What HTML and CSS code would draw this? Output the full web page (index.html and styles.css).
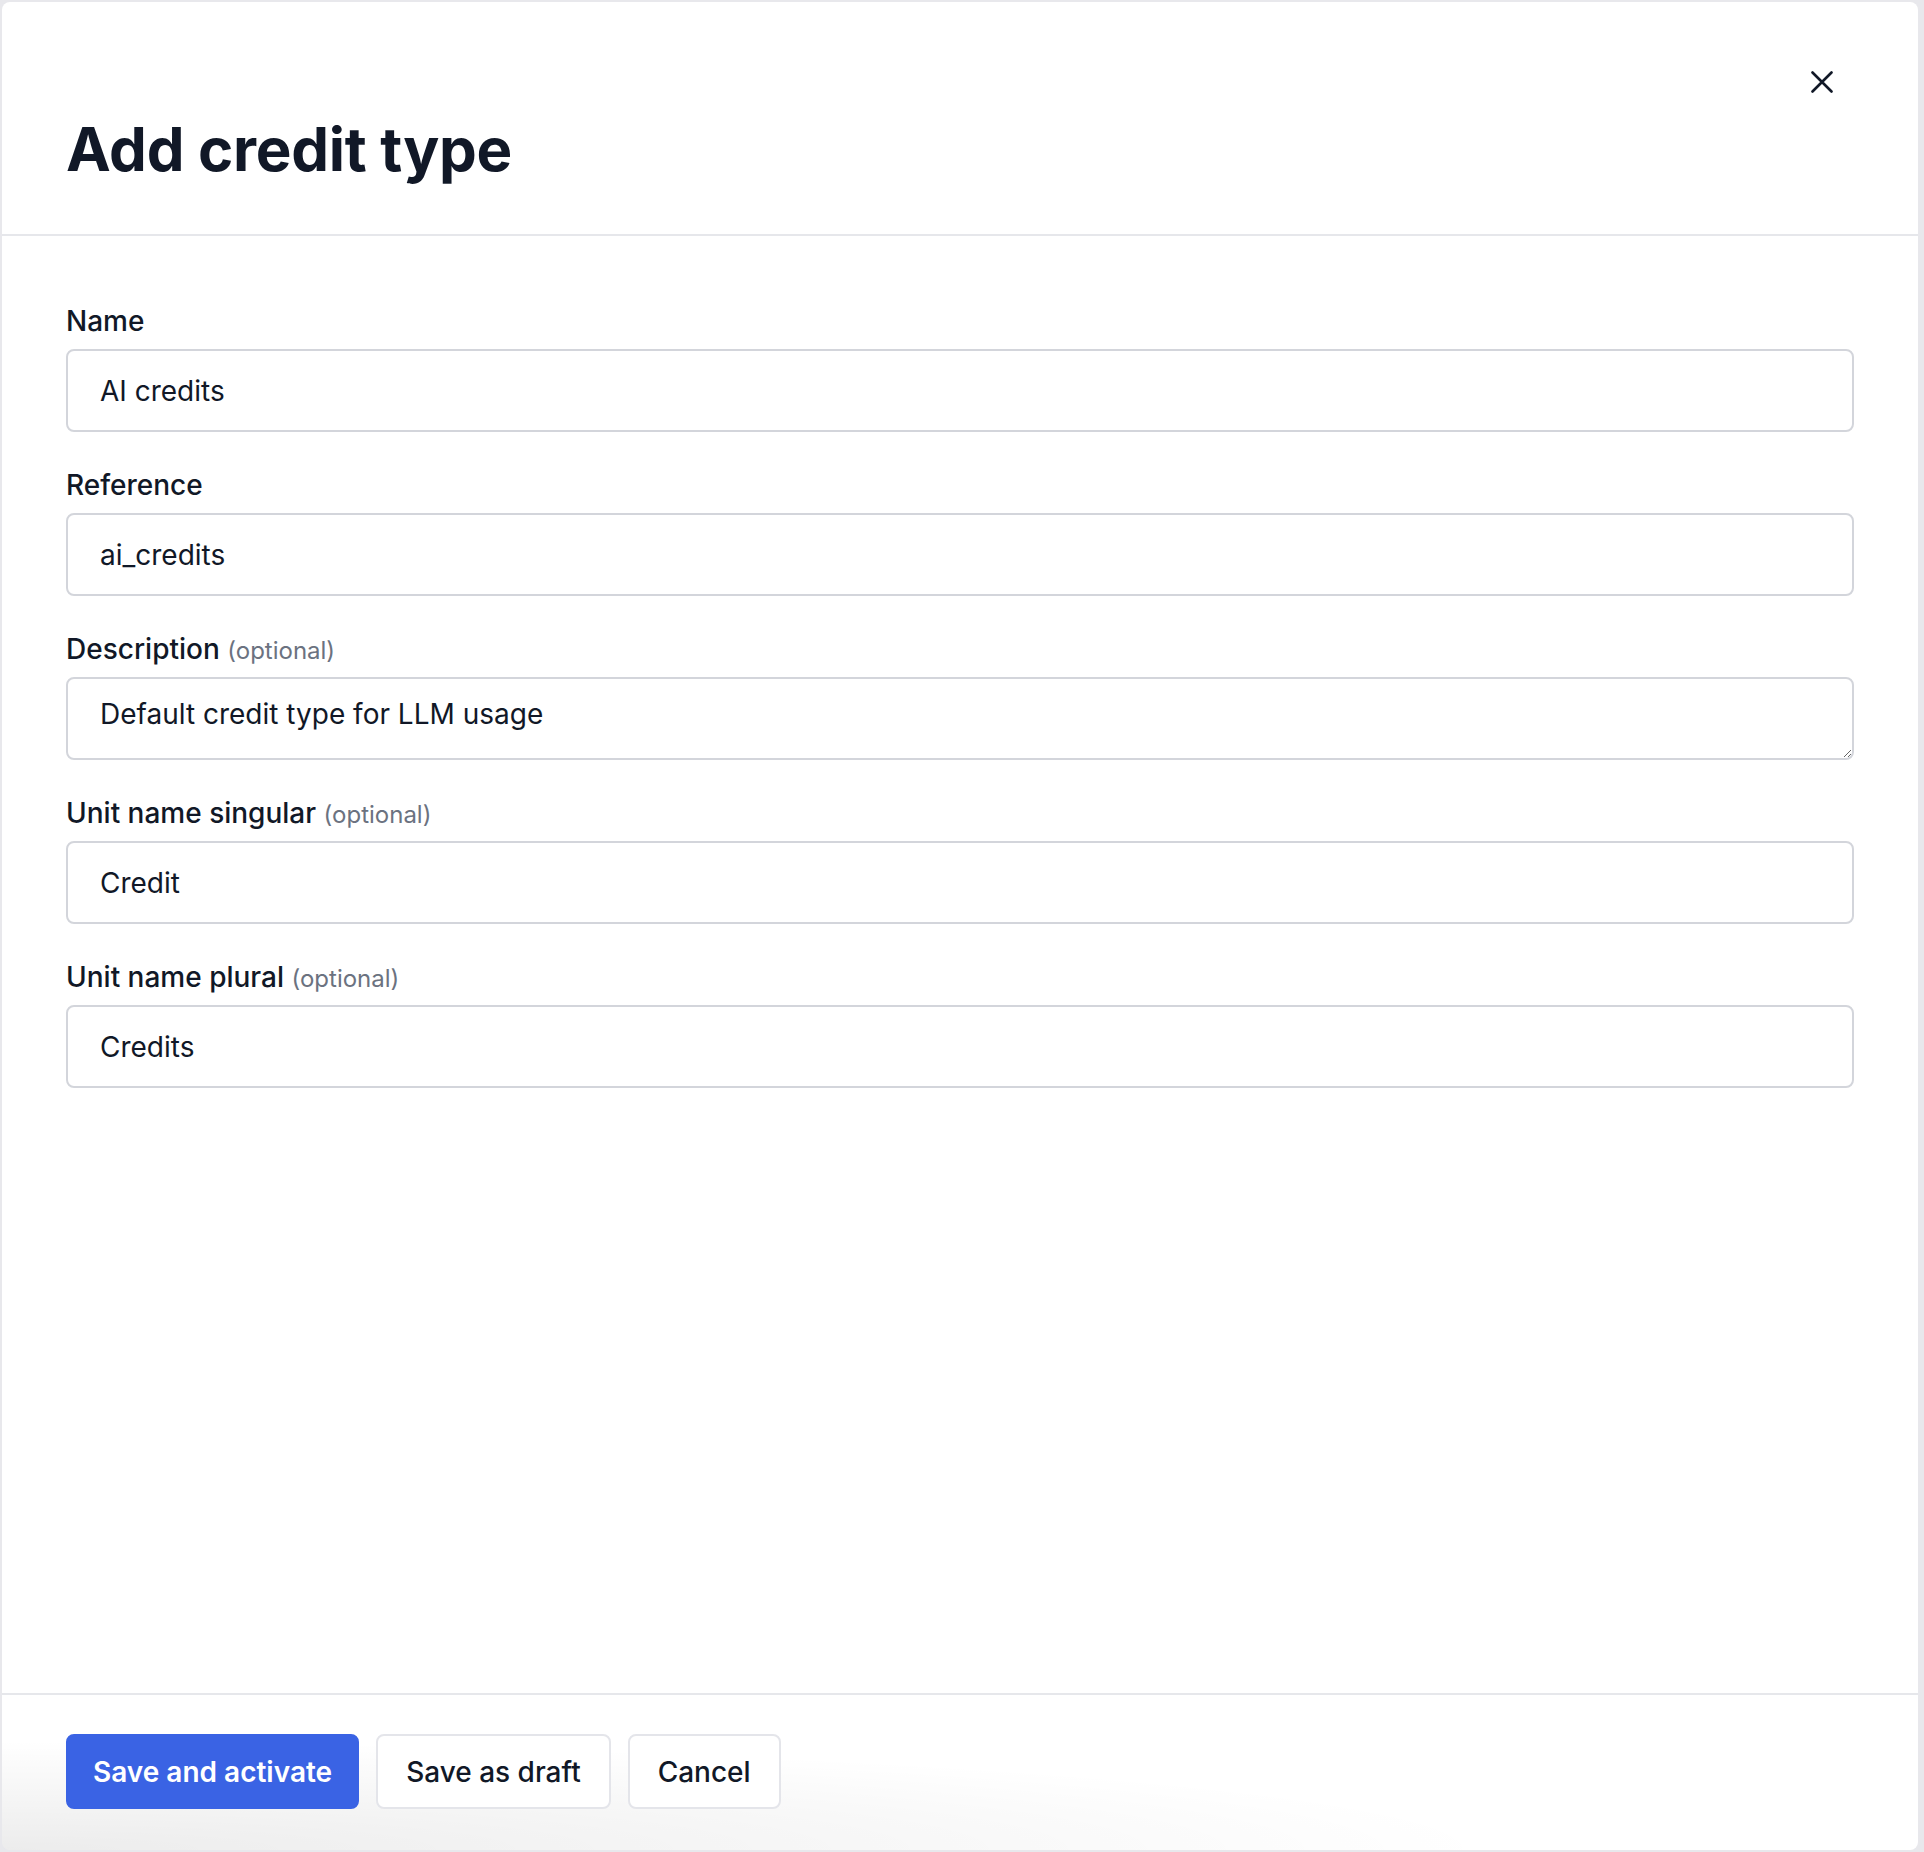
FILE: index.html
```html
<!DOCTYPE html>
<html lang="en">
<head>
<meta charset="utf-8">
<title>Add credit type</title>
<link rel="stylesheet" href="styles.css">
</head>
<body>
<div class="panel">
  <header class="panel-header">
    <div class="close-row">
      <button class="close-btn" type="button" aria-label="Close">
        <svg width="22" height="22" viewBox="0 0 22 22" fill="none" stroke="#111827" stroke-width="2.6" stroke-linecap="round">
          <path d="M1.5 1.5 L20.5 20.5 M20.5 1.5 L1.5 20.5"/>
        </svg>
      </button>
    </div>
    <h1 class="title">Add credit type</h1>
  </header>
  <main class="panel-body">
    <div class="field">
      <label class="label">Name</label>
      <input class="input" type="text" value="AI credits">
    </div>
    <div class="field">
      <label class="label">Reference</label>
      <input class="input" type="text" value="ai_credits">
    </div>
    <div class="field">
      <label class="label">Description <span class="optional">(optional)</span></label>
      <textarea class="input textarea">Default credit type for LLM usage</textarea>
    </div>
    <div class="field">
      <label class="label">Unit name singular <span class="optional">(optional)</span></label>
      <input class="input" type="text" value="Credit">
    </div>
    <div class="field">
      <label class="label">Unit name plural <span class="optional">(optional)</span></label>
      <input class="input" type="text" value="Credits">
    </div>
  </main>
  <footer class="panel-footer">
    <button class="btn btn-primary" type="button">Save and activate</button>
    <button class="btn btn-secondary" type="button">Save as draft</button>
    <button class="btn btn-secondary" type="button">Cancel</button>
  </footer>
</div>
</body>
</html>
```
FILE: styles.css
```css
* { box-sizing: border-box; }
html, body {
  margin: 0;
  padding: 0;
  height: 100%;
}
body {
  background: #e8e8ec;
  font-family: Inter, "Noto Sans", "Liberation Sans", sans-serif;
  color: #111827;
  padding: 2px 6px 2px 2px;
}
.panel {
  height: 100%;
  background: #ffffff;
  border-radius: 8px;
  display: flex;
  flex-direction: column;
  overflow: hidden;
}
.panel-header {
  padding: 58px 64px 50px;
  border-bottom: 2px solid #e6e7eb;
  display: flex;
  flex-direction: column;
}
.close-row {
  display: flex;
  justify-content: flex-end;
  height: 44px;
}
.close-btn {
  width: 44px;
  height: 44px;
  margin-right: 10px;
  border: 0;
  background: transparent;
  padding: 0;
  display: flex;
  align-items: center;
  justify-content: center;
}
.title {
  margin: 10px 0 0;
  font-size: 60px;
  line-height: 70px;
  font-weight: 700;
  letter-spacing: -0.3px;
  color: #111827;
}
.panel-body {
  flex: 1;
  padding: 67px 64px 0;
  display: flex;
  flex-direction: column;
}
.field {
  display: flex;
  flex-direction: column;
  margin-bottom: 35px;
}
.label {
  display: block;
  height: 36px;
  font-size: 28px;
  line-height: 36px;
  font-weight: 500;
  color: #111827;
  margin-bottom: 10px;
}
.optional {
  font-size: 24px;
  line-height: 1;
  font-weight: 400;
  color: #6b7280;
}
.input {
  height: 83px;
  width: 100%;
  border: 2px solid #d3d5db;
  border-radius: 8px;
  padding: 0 32px;
  font-family: Inter, "Noto Sans", "Liberation Sans", sans-serif;
  font-size: 28px;
  color: #111827;
  background: #ffffff;
  outline: none;
}
.textarea {
  height: 83px;
  padding: 15px 32px;
  line-height: 40px;
  resize: vertical;
}
.panel-footer {
  border-top: 2px solid #e6e7eb;
  padding: 39px 64px 41px;
  display: flex;
  gap: 17px;
  background: radial-gradient(ellipse 1500px 110px at 0% 100%, rgba(0,0,0,0.075), rgba(0,0,0,0) 100%);
}
.btn {
  height: 75px;
  border-radius: 8px;
  font-family: Inter, "Noto Sans", "Liberation Sans", sans-serif;
  font-size: 28px;
  font-weight: 500;
}
.btn-primary {
  padding: 0 25px;
  background: #3a63e4;
  border: 2px solid #3a63e4;
  color: #ffffff;
  font-weight: 600;
}
.btn-secondary {
  padding: 0 28px;
  background: #ffffff;
  border: 2px solid #e4e5ea;
  color: #111827;
}
```
